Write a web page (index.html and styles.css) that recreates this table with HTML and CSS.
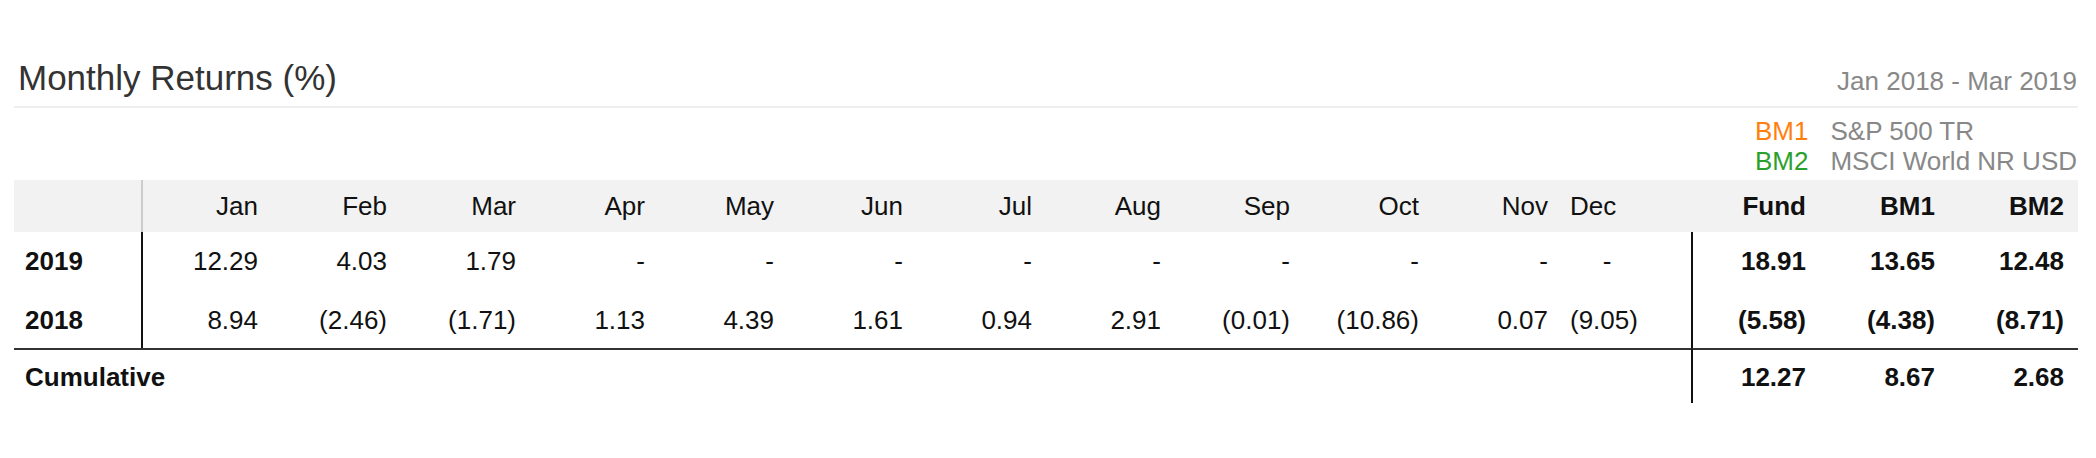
FILE: index.html
```html
<!DOCTYPE html>
<html lang="en">
<head>
<meta charset="utf-8">
<title>Monthly Returns</title>
<link rel="stylesheet" href="styles.css">
</head>
<body>
<div class="page">
  <header class="head">
    <h1 class="title">Monthly Returns (%)</h1>
    <span class="period">Jan 2018 - Mar 2019</span>
  </header>
  <div class="legend">
    <div class="legend-grid">
      <span class="bm bm1">BM1</span><span class="bm-name">S&amp;P 500 TR</span>
      <span class="bm bm2">BM2</span><span class="bm-name">MSCI World NR USD</span>
    </div>
  </div>
  <table class="returns">
    <colgroup>
      <col class="c"><col class="c"><col class="c"><col class="c"><col class="c"><col class="c"><col class="c"><col class="c">
      <col class="c"><col class="c"><col class="c"><col class="c"><col class="c"><col class="c"><col class="c"><col class="c">
    </colgroup>
    <thead>
      <tr>
        <th class="year"></th>
        <th>Jan</th><th>Feb</th><th>Mar</th><th>Apr</th><th>May</th><th>Jun</th>
        <th>Jul</th><th>Aug</th><th>Sep</th><th>Oct</th><th>Nov</th><th class="dec">Dec</th>
        <th class="total">Fund</th><th class="total">BM1</th><th class="total">BM2</th>
      </tr>
    </thead>
    <tbody>
      <tr class="row first">
        <td class="year">2019</td>
        <td>12.29</td><td>4.03</td><td>1.79</td><td>-</td><td>-</td><td>-</td>
        <td>-</td><td>-</td><td>-</td><td>-</td><td>-</td><td class="dec dash">-</td>
        <td class="total fund">18.91</td><td class="total">13.65</td><td class="total">12.48</td>
      </tr>
      <tr class="row last">
        <td class="year">2018</td>
        <td>8.94</td><td>(2.46)</td><td>(1.71)</td><td>1.13</td><td>4.39</td><td>1.61</td>
        <td>0.94</td><td>2.91</td><td>(0.01)</td><td>(10.86)</td><td>0.07</td><td class="dec">(9.05)</td>
        <td class="total fund">(5.58)</td><td class="total">(4.38)</td><td class="total">(8.71)</td>
      </tr>
      <tr class="cumulative">
        <td class="label" colspan="13">Cumulative</td>
        <td class="total fund">12.27</td><td class="total">8.67</td><td class="total">2.68</td>
      </tr>
    </tbody>
  </table>
</div>
</body>
</html>
```

FILE: styles.css
```css
html, body {
  margin: 0;
  padding: 0;
  background: #ffffff;
}

body {
  font-family: "Liberation Sans", Arial, Helvetica, sans-serif;
  color: #111111;
}

.page {
  width: 2064px;
  margin-left: 14px;
}

.head {
  display: flex;
  justify-content: space-between;
  align-items: baseline;
  padding-top: 58px;
  padding-bottom: 8px;
  border-bottom: 2px solid #efefef;
}

.title {
  margin: 0;
  padding-left: 4px;
  font-size: 35px;
  line-height: 40px;
  font-weight: normal;
  color: #333333;
}

.period {
  font-size: 26px;
  line-height: 30px;
  color: #888888;
  padding-right: 1px;
}

.legend {
  display: flex;
  justify-content: flex-end;
  margin-top: 8px;
  padding-right: 1px;
}

.legend-grid {
  display: grid;
  grid-template-columns: auto auto;
  column-gap: 22px;
  font-size: 26px;
  line-height: 30px;
  color: #888888;
}

.bm1 { color: #ff7f0e; }
.bm2 { color: #2ca02c; }

.returns {
  margin-top: 4px;
  width: 2064px;
  table-layout: fixed;
  border-collapse: separate;
  border-spacing: 0;
  font-size: 26px;
  line-height: 30px;
}

.returns col.c {
  width: 129px;
}

.returns th {
  background: #f2f2f2;
  font-weight: normal;
  text-align: right;
  padding: 11px 14px 11px 8px;
  color: #111111;
  white-space: nowrap;
}

.returns td {
  text-align: right;
  padding: 14px 14px 15px 8px;
  white-space: nowrap;
}

.returns .row.last td {
  padding-bottom: 13px;
}

.returns th.year {
  border-right: 2px solid #cccccc;
}

.returns td.year {
  border-right: 2px solid #111111;
  text-align: left;
  font-weight: bold;
  padding-left: 11px;
}

.returns .total {
  font-weight: bold;
}

.returns th.dec,
.returns td.dec {
  text-align: left;
  padding-right: 47px;
}

.returns td.dec.dash {
  text-align: center;
}

.returns td.fund {
  border-left: 2px solid #111111;
}

.returns .cumulative td {
  border-top: 2px solid #333333;
  padding: 12px 14px 11px 8px;
}

.returns .cumulative td.label {
  text-align: left;
  font-weight: bold;
  padding-left: 11px;
}
```
